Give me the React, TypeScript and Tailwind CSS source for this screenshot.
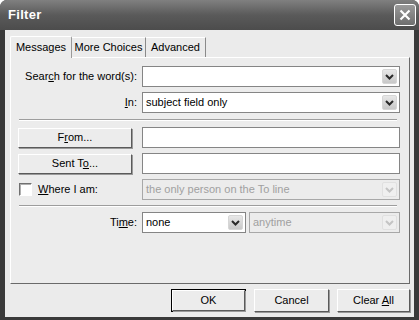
import React from "react";

const font = { fontFamily: '"Liberation Sans", Arial, sans-serif' };

function Chevron({ disabled }: { disabled?: boolean }) {
  return (
    <svg width="9" height="6" viewBox="0 0 9 6">
      <path
        d="M1 1 L4.5 4.5 L8 1"
        fill="none"
        stroke={disabled ? "#c4c4c4" : "#2a2a2a"}
        strokeWidth="2"
      />
    </svg>
  );
}

function Select({
  value,
  disabled,
  className,
}: {
  value?: string;
  disabled?: boolean;
  className?: string;
}) {
  return (
    <div
      className={`flex items-center h-[21px] border ${
        disabled ? "border-[#a8a8a8] bg-[#ececec] text-[#a0a0a0]" : "border-[#858585] bg-white text-black"
      } ${className ?? ""}`}
    >
      <span className="flex-1 pl-[3px] truncate">{value}</span>
      <div
        className={`mr-[2px] w-[15px] h-[15px] flex items-center justify-center rounded-[2px] ${
          disabled ? "bg-[#efefef] border border-[#e0e0e0]" : "bg-gradient-to-b from-[#e8e8e8] to-[#c8c8c8] border border-[#d6d6d6]"
        }`}
      >
        <Chevron disabled={disabled} />
      </div>
    </div>
  );
}

function Input() {
  return <div className="flex-1 h-[21px] border border-[#858585] bg-white" />;
}

function PushButton({ children, className }: { children: React.ReactNode; className?: string }) {
  return (
    <div
      className={`flex items-center justify-center border border-t-white border-l-white border-r-[#5a5a5a] border-b-[#5a5a5a] bg-[#ececec] shadow-[1px_1px_0_#9a9a9a] ${className ?? ""}`}
    >
      <span>{children}</span>
    </div>
  );
}

function Separator() {
  return <div className="ml-[8px] mr-[12px] border-t border-t-[#9d9d9d] border-b border-b-white" />;
}

export default function App() {
  return (
    <div style={font} className="w-[419px] h-[320px] bg-[#3a3a3a] flex flex-col text-[11px] text-black rounded-t-[7px] overflow-hidden">
      {/* title bar */}
      <div className="h-[30px] flex items-center justify-between px-[8px] bg-gradient-to-b from-[#808080] via-[#5a5a5a] to-[#4c4c4c]">
        <span className="text-white font-bold text-[13px] tracking-[0.3px]">Filter</span>
        <div className="w-[22px] h-[22px] mr-[-5px] rounded-[3px] border border-white bg-gradient-to-b from-[#9a9a9a] to-[#6e6e6e] flex items-center justify-center">
          <svg width="12" height="12" viewBox="0 0 12 12">
            <path d="M1.5 1.5 L10.5 10.5 M10.5 1.5 L1.5 10.5" stroke="white" strokeWidth="2.2" />
          </svg>
        </div>
      </div>

      {/* client area */}
      <div className="flex-1 mx-[5px] mb-[3px] bg-[#ebebeb] flex flex-col pt-[5px]">
        {/* tabs */}
        <div className="flex items-end pl-[5px] h-[22px]">
          <div className="h-[22px] w-[62px] flex items-center justify-center border border-b-0 border-[#9a9a9a] border-t-white border-l-white bg-[#ececec] relative z-10 mb-[-1px] rounded-t-[2px]">
            Messages
          </div>
          <div className="h-[20px] w-[74px] flex items-center justify-center border border-b-0 border-l-0 border-[#8a8a8a] border-t-white">
            More Choices
          </div>
          <div className="h-[20px] w-[60px] flex items-center justify-center border border-b-0 border-l-0 border-[#8a8a8a] border-t-white">
            Advanced
          </div>
        </div>

        {/* tab panel */}
        <div className="ml-[5px] mr-[4px] h-[227px] border border-t-white border-l-white border-r-[#6a6a6a] border-b-[#6a6a6a] bg-[#ececec] flex flex-col pt-[8px]">
          <div className="flex items-center pr-[9px]">
            <span className="w-[131px] text-right pr-[5px]">
              Sear<u>c</u>h for the word(s):
            </span>
            <Select className="flex-1" />
          </div>
          <div className="flex items-center pr-[9px] mt-[5px]">
            <span className="w-[131px] text-right pr-[5px]">
              <u>I</u>n:
            </span>
            <Select className="flex-1" value="subject field only" />
          </div>

          <div className="mt-[6px]">
            <Separator />
          </div>

          <div className="flex items-center pr-[9px] mt-[6px] pl-[7px]">
            <PushButton className="w-[114px] h-[20px] mr-[10px]">
              F<u>r</u>om...
            </PushButton>
            <Input />
          </div>
          <div className="flex items-center pr-[9px] mt-[5px] pl-[7px]">
            <PushButton className="w-[114px] h-[20px] mr-[10px]">
              Sent T<u>o</u>...
            </PushButton>
            <Input />
          </div>

          <div className="flex items-center pr-[9px] mt-[5px] pl-[8px]">
            <div className="w-[123px] flex items-center">
              <div className="w-[13px] h-[13px] border border-t-[#707070] border-l-[#707070] border-r-white border-b-white bg-white shadow-[inset_1px_1px_0_#b0b0b0]" />
              <span className="ml-[6px]">
                <u>W</u>here I am:
              </span>
            </div>
            <Select className="flex-1" disabled value="the only person on the To line" />
          </div>

          <div className="mt-[5px]">
            <Separator />
          </div>

          <div className="flex items-center pr-[9px] mt-[5px]">
            <span className="w-[131px] text-right pr-[5px]">
              Ti<u>m</u>e:
            </span>
            <Select className="w-[104px]" value="none" />
            <Select className="flex-1 ml-[3px]" disabled value="anytime" />
          </div>
        </div>

        {/* dialog buttons */}
        <div className="flex justify-end gap-[8px] mt-[5px] pr-[4px]">
          <div className="w-[75px] h-[23px] border border-black">
            <PushButton className="w-full h-full">OK</PushButton>
          </div>
          <PushButton className="w-[75px] h-[23px]">Cancel</PushButton>
          <PushButton className="w-[73px] h-[23px]">
            Clear <u>A</u>ll
          </PushButton>
        </div>
      </div>
    </div>
  );
}
